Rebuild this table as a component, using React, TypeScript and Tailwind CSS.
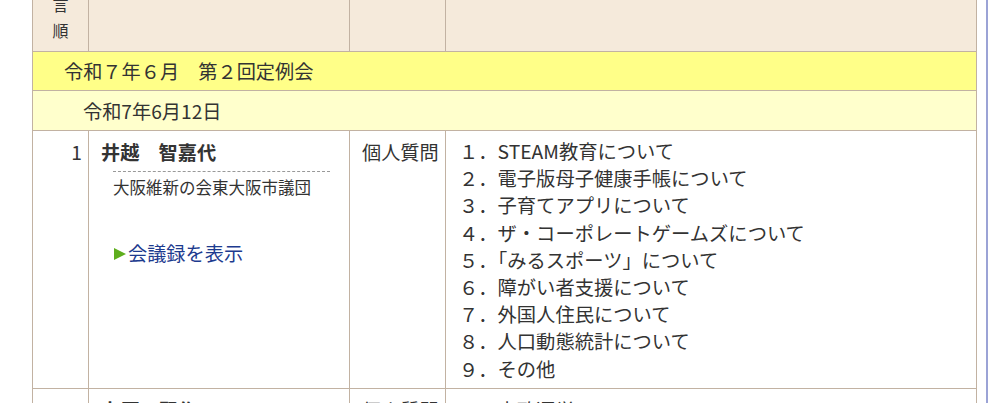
import React from "react";

const items = [
  "STEAM教育について",
  "電子版母子健康手帳について",
  "子育てアプリについて",
  "ザ・コーポレートゲームズについて",
  "「みるスポーツ」について",
  "障がい者支援について",
  "外国人住民について",
  "人口動態統計について",
  "その他",
];
const nums = ["１", "２", "３", "４", "５", "６", "７", "８", "９"];

export default function App() {
  return (
    <div
      className="h-[403px] w-[1006px] overflow-hidden bg-white text-[#333]"
      style={{ fontFamily: '"Noto Sans CJK JP", "Noto Sans", sans-serif' }}
    >
      <div className="flex h-full">
        <div className="w-[986px] pl-[32px]">
          <table className="-mt-[44px] w-[944px] table-fixed border-collapse">
            <colgroup>
              <col className="w-[56px]" />
              <col className="w-[261px]" />
              <col className="w-[96px]" />
              <col className="w-[531px]" />
            </colgroup>
            <tbody>
              <tr className="bg-[#f5eadb]">
                <td className="border border-[#c2b2a2] py-[8px] text-center align-top text-[16px] leading-[26px]">
                  発<br />言<br />順
                </td>
                <td className="border border-[#c2b2a2]" />
                <td className="border border-[#c2b2a2]" />
                <td className="border border-[#c2b2a2]" />
              </tr>
              <tr className="bg-[#ffff88]">
                <td
                  colSpan={4}
                  className="h-[39px] border border-[#c2b2a2] pl-[31px] align-middle text-[19.2px] leading-[24px]"
                >
                  令和７年６月　第２回定例会
                </td>
              </tr>
              <tr className="bg-[#ffffcc]">
                <td
                  colSpan={4}
                  className="h-[40px] border border-[#c2b2a2] pl-[50px] align-middle text-[19.2px] leading-[24px]"
                >
                  令和7年6月12日
                </td>
              </tr>
              <tr className="bg-white">
                <td className="border border-[#c2b2a2] pr-[6px] pt-[8px] text-right align-top text-[19.2px] leading-[27px]">
                  1
                </td>
                <td className="border border-[#c2b2a2] pl-[12px] pr-[19px] pt-[8px] align-top">
                  <div className="text-[19.2px] font-bold leading-[27px]">井越　智嘉代</div>
                  <div className="ml-[12px] mt-[5px] border-t border-dashed border-[#999] pt-[3px] text-[16.5px] leading-[24px]">
                    大阪維新の会東大阪市議団
                  </div>
                  <div className="ml-[12px] mt-[41px] flex items-center text-[19.2px] leading-[27px] text-[#1d3b8f]">
                    <svg width="14" height="16" viewBox="0 0 14 16" className="mr-[1px]">
                      <polygon points="1,2 13,8 1,14" fill="#5fae1e" />
                    </svg>
                    <span>会議録を表示</span>
                  </div>
                </td>
                <td className="border border-[#c2b2a2] pl-[12px] pt-[8px] align-top text-[19.2px] leading-[27px]">
                  個人質問
                </td>
                <td className="border border-[#c2b2a2] pb-[5px] pl-[13px] pt-[7px] align-top text-[19.3px] leading-[27.2px]">
                  {items.map((t, i) => (
                    <div key={i}>
                      {nums[i]}．{t}
                    </div>
                  ))}
                </td>
              </tr>
              <tr className="bg-white">
                <td className="border border-[#c2b2a2] pr-[6px] pt-[8px] text-right align-top text-[19.2px] leading-[27px]">
                  2
                </td>
                <td className="border border-[#c2b2a2] pl-[12px] pt-[8px] align-top text-[19.2px] font-bold leading-[27px]">
                  上原　賢作
                </td>
                <td className="border border-[#c2b2a2] pl-[12px] pt-[8px] align-top text-[19.2px] leading-[27px]">
                  個人質問
                </td>
                <td className="border border-[#c2b2a2] pl-[13px] pt-[8px] align-top text-[19.3px] leading-[27.2px]">
                  １．市政運営について
                </td>
              </tr>
            </tbody>
          </table>
        </div>
        <div className="h-full w-[2px] bg-[#9ba3d6]" />
      </div>
    </div>
  );
}
